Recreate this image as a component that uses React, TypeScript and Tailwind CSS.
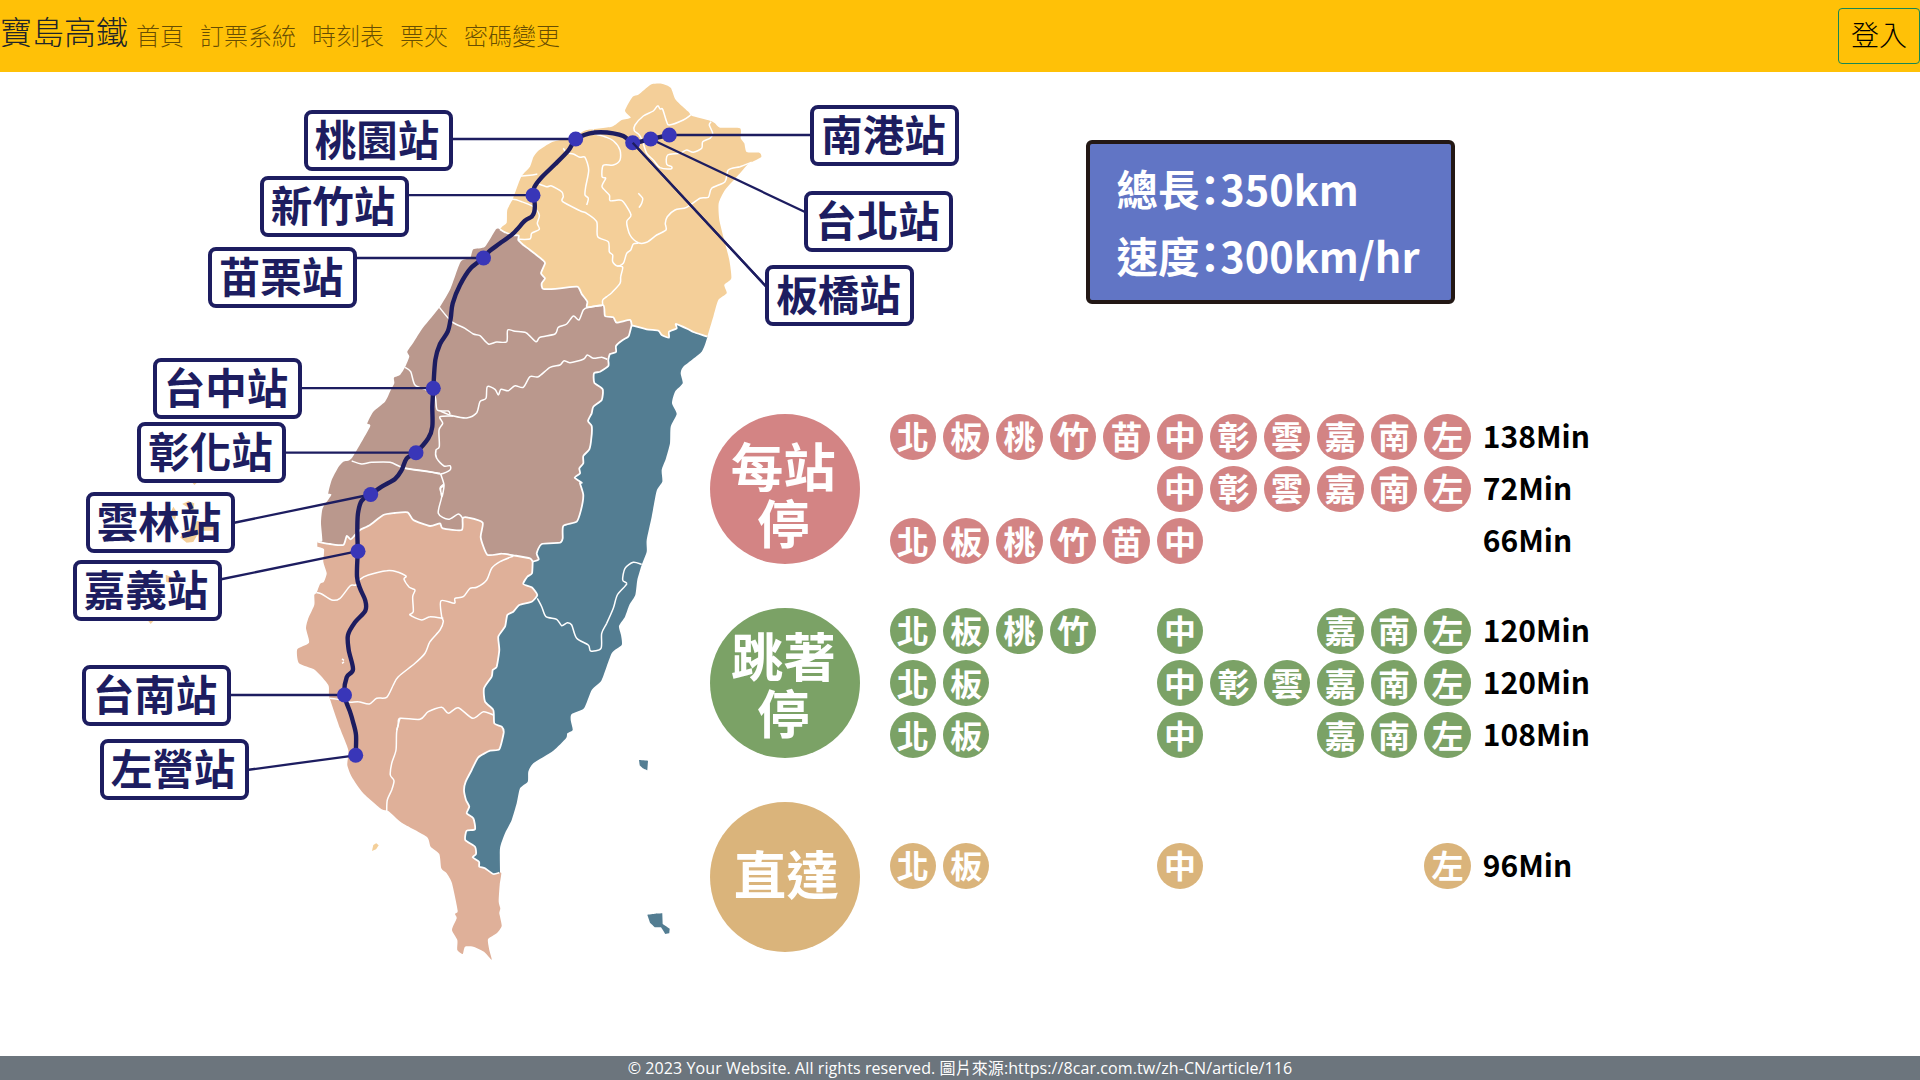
type Pt = [number, number];

/** Reads "x,y x,y ..." recorded at triple scale from a sheet origin, giving map units. */
const sheet =
  (ox: number, oy: number) =>
  (s: string): Pt[] =>
    s
      .trim()
      .split(/\s+/)
      .map((p) => {
        const [x, y] = p.split(',').map(Number);
        return [ox + x / 3, oy + y / 3] as Pt;
      });

const a = sheet(480, 70);
const b = sheet(400, 220);
const c = sheet(280, 480);
const d = sheet(280, 700);
const e = sheet(60, 340);
const f = sheet(290, 280);

const rev = (p: Pt[]) => [...p].reverse();

/** Smooth open curve through the points. k is the tension (0 = straight lines). */
function curve(p: Pt[], k = 0.1): string {
  let out = `M${p[0][0].toFixed(1)} ${p[0][1].toFixed(1)}`;
  for (let i = 0; i < p.length - 1; i++) {
    const p0 = p[i - 1] ?? p[i];
    const p1 = p[i];
    const p2 = p[i + 1];
    const p3 = p[i + 2] ?? p2;
    const q = [
      p1[0] + (p2[0] - p0[0]) * k,
      p1[1] + (p2[1] - p0[1]) * k,
      p2[0] - (p3[0] - p1[0]) * k,
      p2[1] - (p3[1] - p1[1]) * k,
      p2[0],
      p2[1],
    ].map((n) => n.toFixed(1));
    out += `C${q.join(' ')}`;
  }
  return out;
}

const northCoast = a(
  '60,478 66,470 80,458 82,420 98,388 110,355 125,318 150,290 160,262 175,242 215,217 260,205 300,190 320,180 395,170 425,150 452,143 435,122 458,80 475,74 500,53 517,42 545,41 572,53 586,88 610,112 628,128 635,137 690,152 705,160 720,173 780,175 782,205 793,220 800,246 838,248 843,262 805,282 780,310 735,360 716,400 718,450 735,520 748,570 754,625 733,645 740,670 715,690 700,740 682,800',
);
const northEast = a('682,800 640,786 625,778 588,762 590,775 567,785 567,803 545,795 535,782 500,778 455,766');
const northCentral = a(
  '455,766 450,750 410,758 400,742 375,738 370,706 322,712 322,695 305,672 292,650 240,655 190,657 185,640 195,625 183,610 195,580 188,570 150,540 130,525 115,510 116,497 100,495 75,487 60,478',
);
const centralEast = [
  ...b(
    '695,316 690,335 685,350 665,362 648,378 648,396 630,402 625,420 625,438 600,455 582,460 583,488 608,508 605,540 580,560 575,580 564,603 575,618 574,655 568,688 550,708 550,730 538,745 540,760 524,773 545,788',
  ),
  ...c('900,10 910,45 903,90 890,125 850,138 848,175 840,188 785,192 770,220 776,238 758,245'),
];
const centralSouth = c(
  '112,185 150,192 190,195 200,168 212,178 225,165 240,150 270,135 310,105 345,99 383,97 400,120 450,138 480,130 488,145 545,150 548,115 565,113 608,128 602,172 622,224 665,221 700,226 750,235 758,245',
);
const centralCoast = [
  ...b('300,28 288,28 255,80 220,88 210,115 182,125 152,205 120,260 70,322 40,368'),
  ...f(
    '352,215 358,230 345,262 330,285 312,293 313,310 300,335 285,365 250,395 232,430 240,440 185,535 160,545 145,562 125,600 115,640 124,645 98,685 93,730',
  ),
  ...c('127,182 112,185'),
];
const southEast = [
  ...c(
    '758,245 756,280 742,290 730,312 755,322 772,345 755,365 718,375 700,395 682,405 675,440 655,470 658,510 650,560 638,570 635,590 612,625 615,665 640,690',
  ),
  ...d(
    '643,70 665,80 671,98 658,148 630,152 595,172 575,210 557,245 552,270 558,300 568,320 560,340 580,355 585,388 560,392 556,420 585,440 588,462 578,472 597,485 598,500 615,505 640,522 658,518',
  ),
];
const eastCoast = [
  ...b(
    '922,352 905,395 850,440 842,460 848,490 825,515 816,550 830,582 812,620 810,670 798,715 785,750 787,785 770,812',
  ),
  ...c(
    '1115,110 1100,180 1100,215 1085,255 1072,300 1066,345 1048,375 1035,410 1017,438 1023,465 1025,495 995,520 965,600 935,630 912,685 875,702 872,720 878,750',
  ),
  ...d('862,100 858,115 820,152 760,190 745,215 743,245 720,265 710,310 695,360 675,400 660,445 660,515'),
];
const southCoast = [
  ...c(
    '112,200 132,208 130,245 140,280 132,305 120,312 110,338 103,345 103,375 85,415 78,445 87,488 52,508 57,550 105,570 145,615 148,650 180,745',
  ),
  ...d(
    '205,150 202,195 215,230 250,280 305,328 325,333 365,368 440,410 452,440 478,462 484,505 500,520 516,550 533,632 525,642 530,655 516,690 532,720 532,750 548,762 555,740 580,740 612,755 635,779 628,750 624,718 650,700 665,678 658,640 661,625 656,605 659,555 664,520',
  ),
];

const regions = [
  { fill: '#dfb099', pts: [...centralSouth, ...southEast, ...rev(southCoast)] },
  { fill: '#ba988d', pts: [...northCentral, ...centralCoast, ...centralSouth, ...rev(centralEast)] },
  { fill: '#537d92', pts: [...rev(northEast), ...eastCoast, ...rev(southEast), ...rev(centralEast)] },
  { fill: '#f4cf99', pts: [...northCoast, ...northEast, ...northCentral] },
];
const regionBorders = [northEast, northCentral, centralEast, centralSouth, southEast];

const countyLines: Pt[][] = [
  a(
    '632,135 610,150 568,165 560,155 548,118 540,117 533,107 520,123 490,138 465,165 463,182 478,195 488,215 500,250 520,270 540,293 572,297 575,290 560,283 563,255 600,250 620,240 640,247 665,235 668,215 690,205 698,190 688,165 693,155',
  ),
  a('120,318 150,316 172,312'),
  a(
    '172,340 200,350 215,348 245,365 250,380 248,395 300,422 320,430 350,455 353,500 385,515 388,545 398,555 398,575 412,588 430,580 440,550 452,540 460,522 475,520',
  ),
  a('250,235 260,248 280,252 300,262 315,262 326,300 317,350 315,375 325,385 320,405'),
  a(
    '340,178 342,190 375,200 400,212 420,240 420,270 400,285 370,286 366,320 377,325 366,350 388,375 390,392 415,390 430,395 453,435 440,455 450,495 475,518 500,517 530,495 558,480 556,460 562,440 585,420 620,412 660,385 685,382 695,355 735,335 745,300 780,290 815,277',
  ),
  a('412,588 428,592 422,620 420,640 395,668 380,680 368,690 368,705'),
  a('475,370 488,385 485,400 477,413'),
  a('75,414 85,400 98,388 125,395 160,410 178,435 172,460 178,478 155,490 150,507 115,508'),
  b(
    '118,262 155,305 195,325 220,342 240,347 265,372 290,366 320,365 323,330 345,334 378,338 408,365 420,352 465,342 475,322 500,312 520,288 537,300 550,270 565,262 605,257',
  ),
  b('15,442 32,455 45,495 80,510 105,530 112,570 145,573 150,583'),
  b(
    '122,574 160,588 200,594 230,578 240,545 258,535 262,500 285,508 295,525 303,508 325,512 345,497 370,502 390,470 415,470 450,442 480,435 492,422 510,428 550,418 562,405 580,415 605,412 622,418',
  ),
  b('160,588 120,590 128,610 117,630 118,680 108,690 110,715 132,738 150,737 150,750 122,762 90,755 15,745'),
  f('185,543 215,552 245,547 300,547 345,565 450,580'),
  [...b('122,762 132,795 122,805 126,830'), ...c('492,15 480,25 485,50 475,100 505,118 535,102 548,115')],
  c(
    '110,338 125,342 155,360 180,355 210,318 228,315 240,298 265,285 320,272 350,275 378,288 372,298 388,322 405,330 398,350 400,395 390,405 425,420 450,410 490,415',
  ),
  c(
    '700,228 660,245 635,265 620,300 590,322 570,325 550,350 525,355 523,370 483,362 485,410 490,425 480,450 450,485 435,520 405,550 355,590 340,615 320,652 290,655 268,672 235,665 210,667 185,660 150,655',
  ),
  c(
    '350,750 355,735 360,715 420,718 445,695 485,682 505,700 535,683 578,715 610,695 640,705',
  ),
  d('360,55 350,95 348,150 335,190 331,225 342,242 335,270 322,300 320,333'),
  c(
    '772,355 785,380 798,410 830,418 845,437 862,428 875,435 890,475 925,495 932,513 963,505 965,460 980,430 1000,385 1012,345 1040,312 1028,300 1035,265 1060,247 1085,253',
  ),
  c('186,537 192,541'),
  c('186,550 192,546'),
];

const islets = [
  { fill: '#f4cf99', pts: e('330,522 340,500 350,515 345,542') },
  { fill: '#f4cf99', pts: e('367,492 385,483 403,490 400,520 388,505') },
  { fill: '#f4cf99', pts: e('360,592 385,570 410,543 462,548 458,572 425,572 410,588 400,606 380,608') },
  { fill: '#f4cf99', pts: e('317,705 340,712 332,730 318,725') },
  { fill: '#f4cf99', pts: e('265,843 280,843 272,852') },
  { fill: '#f4cf99', pts: e('398,429 410,429 403,435') },
  { fill: '#f4cf99', pts: d('276,453 280,435 289,430 296,436 288,448') },
  { fill: '#537d92', pts: d('1077,180 1104,182 1102,211 1088,205 1079,196') },
  {
    fill: '#537d92',
    pts: d('1102,644 1125,641 1147,640 1148,672 1169,686 1168,700 1156,702 1143,682 1125,682 1110,668'),
  },
];

const route: Pt[] = [
  ...a(
    '568,195 512,207 485,214 458,218 430,198 400,190 362,187 330,190 288,207 265,242 225,283 185,322 163,352 159,376 164,400 163,425 155,440 135,452 100,490 60,520 30,542',
  ),
  ...b('250,115 212,145 180,195 158,250 152,295 143,335 120,372 106,420 100,505 97,560 97,620 85,655 48,697'),
  ...f('350,535 335,570 315,597 275,620 243,643'),
  ...c(
    '245,62 234,100 232,150 233,213 231,290 240,325 256,362 256,392 225,427 204,465 206,510 219,568 200,592 193,645 210,695',
  ),
  ...d('218,62 228,105 227,165'),
];

interface Station {
  name: string;
  dot: Pt;
  anchor: Pt;
  place: string;
}

const stations: Station[] = [
  { name: '南港站', dot: [669.3, 135], anchor: [811, 135], place: 'left-[810px] top-[104.5px]' },
  { name: '台北站', dot: [650.7, 139], anchor: [805, 212], place: 'left-[804px] top-[191px]' },
  { name: '板橋站', dot: [632.7, 142.7], anchor: [767, 287.5], place: 'left-[765px] top-[264.5px]' },
  { name: '桃園站', dot: [575.7, 139], anchor: [451, 139], place: 'left-[303.5px] top-[109.5px]' },
  { name: '新竹站', dot: [533, 195.2], anchor: [406, 195.2], place: 'left-[259.5px] top-[176px]' },
  { name: '苗栗站', dot: [483.5, 258], anchor: [356, 258], place: 'left-[207.5px] top-[247px]' },
  { name: '台中站', dot: [433.3, 388.2], anchor: [301, 388.2], place: 'left-[152.5px] top-[357.5px]' },
  { name: '彰化站', dot: [416, 452.7], anchor: [285, 452.7], place: 'left-[137px] top-[422px]' },
  { name: '雲林站', dot: [370.7, 494.5], anchor: [233, 523], place: 'left-[85.5px] top-[492px]' },
  { name: '嘉義站', dot: [358, 551.2], anchor: [220, 579.5], place: 'left-[72.5px] top-[560px]' },
  { name: '台南站', dot: [344.5, 695], anchor: [230, 695], place: 'left-[81.5px] top-[664.5px]' },
  { name: '左營站', dot: [355.7, 755.3], anchor: [247, 770], place: 'left-[99.5px] top-[739px]' },
];

function TaiwanMap() {
  return (
    <div className="relative col-start-1 row-start-1 h-[984px] w-[980px]">
      <svg className="block" width="980" height="984" viewBox="0 72 980 984" fill="none" strokeLinejoin="round">
        {regions.map((r) => (
          <path key={r.fill} d={curve(r.pts) + 'Z'} fill={r.fill} />
        ))}
        {islets.map((r, i) => (
          <path key={i} d={curve(r.pts, 0) + 'Z'} fill={r.fill} />
        ))}
        {countyLines.map((p, i) => (
          <path key={i} d={curve(p, 0.14)} stroke="#fff" strokeWidth="1.5" />
        ))}
        {regionBorders.map((p, i) => (
          <path key={i} d={curve(p)} stroke="#fff" strokeWidth="1.8" />
        ))}
        {stations.map((s) => (
          <path key={s.name} d={curve([s.anchor, s.dot], 0)} stroke="#1d1d60" strokeWidth="2.3" />
        ))}
        <path d={curve(route, 0.16)} stroke="#1d1d60" strokeWidth="4.4" />
        {stations.map((s) => (
          <circle key={s.name} cx={s.dot[0]} cy={s.dot[1]} r="7.5" fill="#3936b8" />
        ))}
        <path d={curve([stations[2].dot, stations[2].anchor], 0)} stroke="#1d1d60" strokeWidth="2.3" />
      </svg>
      <div className="absolute inset-x-0 -top-[72px]">
        {stations.map((s) => (
          <div
            key={s.name}
            className={`absolute flex h-[61px] w-[149px] items-center justify-center rounded-lg border-4 border-[#1d1d60] pr-0.5 pb-[3px] text-[41.5px] leading-none font-bold whitespace-nowrap text-[#1d1d60] ${s.place}`}
          >
            {s.name}
          </div>
        ))}
      </div>
    </div>
  );
}

const stopOrder = ['北', '板', '桃', '竹', '苗', '中', '彰', '雲', '嘉', '南', '左'];

interface Service {
  title: string[];
  color: string;
  offset: string;
  titleOffset: string;
  runs: { stops: string; time: string }[];
}

const services: Service[] = [
  {
    title: ['每站', '停'],
    color: 'bg-[#d38484]',
    offset: '',
    titleOffset: 'pt-[9px]',
    runs: [
      { stops: '北板桃竹苗中彰雲嘉南左', time: '138Min' },
      { stops: '中彰雲嘉南左', time: '72Min' },
      { stops: '北板桃竹苗中', time: '66Min' },
    ],
  },
  {
    title: ['跳著', '停'],
    color: 'bg-[#7ba266]',
    offset: '',
    titleOffset: 'pt-[1px]',
    runs: [
      { stops: '北板桃竹中嘉南左', time: '120Min' },
      { stops: '北板中彰雲嘉南左', time: '120Min' },
      { stops: '北板中嘉南左', time: '108Min' },
    ],
  },
  {
    title: ['直達'],
    color: 'bg-[#dab47b]',
    offset: 'pt-[41px]',
    titleOffset: 'pb-[9px] pl-1.5',
    runs: [{ stops: '北板中左', time: '96Min' }],
  },
];

function Timetable() {
  return (
    <div className="mt-[110px] ml-[709.5px] flex flex-col gap-[43.6px]">
      {services.map((s) => (
        <div key={s.title[0]} className="flex h-[150.5px]">
          <div
            className={`flex size-[150.5px] flex-col items-center justify-center rounded-full pr-[3px] text-[52.5px] leading-[57.5px] font-bold text-white ${s.color} ${s.titleOffset}`}
          >
            {s.title.map((t) => (
              <span key={t}>{t}</span>
            ))}
          </div>
          <div className={`ml-[29.5px] flex flex-col gap-[6px] ${s.offset}`}>
            {s.runs.map((r, i) => (
              <div key={i} className="flex h-[46.3px] items-center gap-[7.2px]">
                {stopOrder.map((stop) =>
                  r.stops.includes(stop) ? (
                    <span
                      key={stop}
                      className={`flex size-[46.3px] items-center justify-center rounded-full pb-[3px] text-[32px] leading-none font-bold text-white ${s.color}`}
                    >
                      {stop}
                    </span>
                  ) : (
                    <span key={stop} className="size-[46.3px]" />
                  ),
                )}
                <span className="ml-[5px] pb-1 text-[30px] leading-none font-bold whitespace-nowrap text-black">
                  {r.time}
                </span>
              </div>
            ))}
          </div>
        </div>
      ))}
    </div>
  );
}

const links = ['首頁', '訂票系統', '時刻表', '票夾', '密碼變更'];

export default function App() {
  return (
    <div
      className="flex h-[1080px] w-[1920px] flex-col overflow-hidden bg-white"
      style={{ fontFamily: '"Noto Sans CJK TC", sans-serif' }}
    >
      <nav className="flex h-[72px] shrink-0 items-center bg-[#ffc107]">
        <span className="pb-3 text-[32px] leading-none font-light text-[#212529]">寶島高鐵</span>
        <div className="ml-2 flex gap-4 pb-[3px] text-[24px] leading-none font-light text-black/60">
          {links.map((l) => (
            <a key={l}>{l}</a>
          ))}
        </div>
        <button className="ml-auto h-14 rounded border border-[#198754] px-3 pb-1 text-[28px] leading-none font-light text-black">
          登入
        </button>
      </nav>
      <main className="grid h-[984px]">
        <TaiwanMap />
        <div className="col-start-1 row-start-1">
          <section className="mt-[67.5px] ml-[1086px] flex h-[164px] w-[369px] flex-col justify-center rounded-md border-[4.5px] border-[#231815] bg-[#6175c5] pl-[26.5px] text-[41.5px] leading-[66.6px] font-bold whitespace-nowrap text-white [font-feature-settings:'halt']">
            <p>總長：350km</p>
            <p>速度：300km/hr</p>
          </section>
          <Timetable />
        </div>
      </main>
      <footer
        className="flex h-6 shrink-0 items-center justify-center bg-[#6c757d] text-[16px] leading-none tracking-[0.085px] text-white"
        style={{ fontFamily: '"Open Sans", "Noto Sans CJK TC", sans-serif' }}
      >
        <span className="whitespace-nowrap">
          © 2023 Your Website. All rights reserved. 圖片來源:https://8car.com.tw/zh-CN/article/116
        </span>
      </footer>
    </div>
  );
}
